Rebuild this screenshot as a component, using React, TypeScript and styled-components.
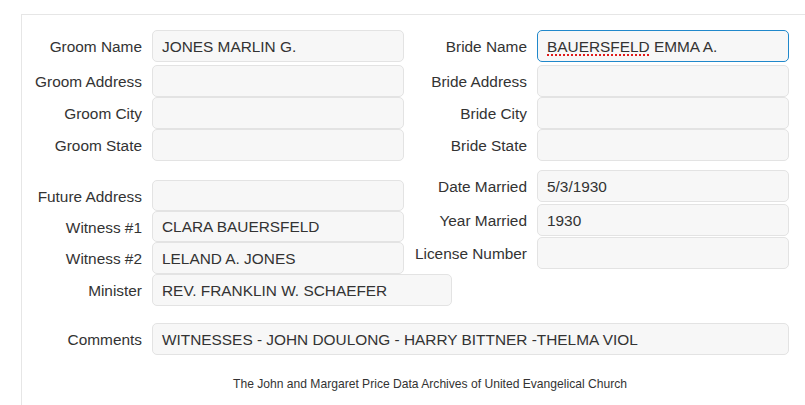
import React from 'react';
import styled, { createGlobalStyle } from 'styled-components';

const GlobalStyle = createGlobalStyle`
   html, body {
      margin: 0;
      padding: 0;
      background: #ffffff;
      overflow: hidden;
   }
   body {
      font-family: "Liberation Sans", Arial, sans-serif;
      color: #333333;
   }
`;

const Page = styled.div`
   box-sizing: border-box;
   width: 805px;
   height: 405px;
   padding: 14px 0 0 21px;
   overflow: hidden;
`;

const Panel = styled.div`
   border-top: 1px solid #e6e6e6;
   border-left: 1px solid #e6e6e6;
   min-height: 400px;
   padding-top: 15px;
   width: 816px;
`;

const Section = styled.div<{ $top?: number }>`
   display: flex;
   align-items: flex-start;
   margin-top: ${(p) => p.$top ?? 0}px;
`;

const Column = styled.div<{ $width: number; $padTop?: number }>`
   display: flex;
   flex-direction: column;
   width: ${(p) => p.$width}px;
   padding-top: ${(p) => p.$padTop ?? 0}px;
`;

const Row = styled.div<{ $after?: number }>`
   display: flex;
   align-items: center;
   margin-bottom: ${(p) => p.$after ?? 0}px;
`;

const Label = styled.div<{ $width: number }>`
   flex: none;
   width: ${(p) => p.$width}px;
   padding: 2px 10px 0 0;
   box-sizing: border-box;
   text-align: right;
   font-size: 15.4px;
   white-space: nowrap;
`;

const Field = styled.div<{ $width: number; $height?: number; $focused?: boolean }>`
   flex: none;
   box-sizing: border-box;
   width: ${(p) => p.$width}px;
   height: ${(p) => p.$height ?? 32}px;
   display: flex;
   align-items: center;
   padding: 1px 9px 0;
   background: #f7f7f7;
   border: 1px solid ${(p) => (p.$focused ? '#2088cb' : '#e3e3e3')};
   border-radius: 5px;
   font-size: 15.4px;
   color: #333333;
   white-space: nowrap;
   overflow: hidden;
`;

const Misspelled = styled.span`
   text-decoration: underline dotted #e01b1b;
   text-decoration-thickness: 2px;
   text-underline-offset: 3px;
`;

const Footer = styled.div`
   margin-top: 22px;
   text-align: center;
   font-size: 12.1px;
   color: #333333;
`;

type FieldProps = {
   label: string;
   labelWidth: number;
   width?: number;
   height?: number;
   after?: number;
   focused?: boolean;
   children?: React.ReactNode;
};

function FormField({ label, labelWidth, width = 252, height, after, focused, children }: FieldProps) {
   return (
      <Row $after={after}>
         <Label $width={labelWidth + 10}>{label}</Label>
         <Field $width={width} $height={height} $focused={focused}>
            {children}
         </Field>
      </Row>
   );
}

export default function App() {
   return (
      <>
         <GlobalStyle />
         <Page>
            <Panel>
               <Section>
                  <Column $width={382}>
                     <FormField label="Groom Name" labelWidth={120} after={3}>
                        JONES MARLIN G.
                     </FormField>
                     <FormField label="Groom Address" labelWidth={120} />
                     <FormField label="Groom City" labelWidth={120} />
                     <FormField label="Groom State" labelWidth={120} />
                  </Column>
                  <Column $width={385}>
                     <FormField label="Bride Name" labelWidth={123} after={3} focused>
                        <Misspelled>BAUERSFELD</Misspelled>&nbsp;EMMA A.
                     </FormField>
                     <FormField label="Bride Address" labelWidth={123} />
                     <FormField label="Bride City" labelWidth={123} />
                     <FormField label="Bride State" labelWidth={123} />
                  </Column>
               </Section>

               <Section $top={9}>
                  <Column $width={382} $padTop={10}>
                     <FormField label="Future Address" labelWidth={120} height={31} />
                     <FormField label="Witness #1" labelWidth={120} height={31}>
                        CLARA BAUERSFELD
                     </FormField>
                     <FormField label="Witness #2" labelWidth={120}>
                        LELAND A. JONES
                     </FormField>
                     <FormField label="Minister" labelWidth={120} width={300}>
                        REV. FRANKLIN W. SCHAEFER
                     </FormField>
                  </Column>
                  <Column $width={385}>
                     <FormField label="Date Married" labelWidth={123} after={2}>
                        5/3/1930
                     </FormField>
                     <FormField label="Year Married" labelWidth={123} after={1}>
                        1930
                     </FormField>
                     <FormField label="License Number" labelWidth={123} />
                  </Column>
               </Section>

               <Section $top={17}>
                  <FormField label="Comments" labelWidth={120} width={637}>
                     WITNESSES - JOHN DOULONG - HARRY BITTNER -THELMA VIOL
                  </FormField>
               </Section>

               <Footer>The John and Margaret Price Data Archives of United Evangelical Church</Footer>
            </Panel>
         </Page>
      </>
   );
}
